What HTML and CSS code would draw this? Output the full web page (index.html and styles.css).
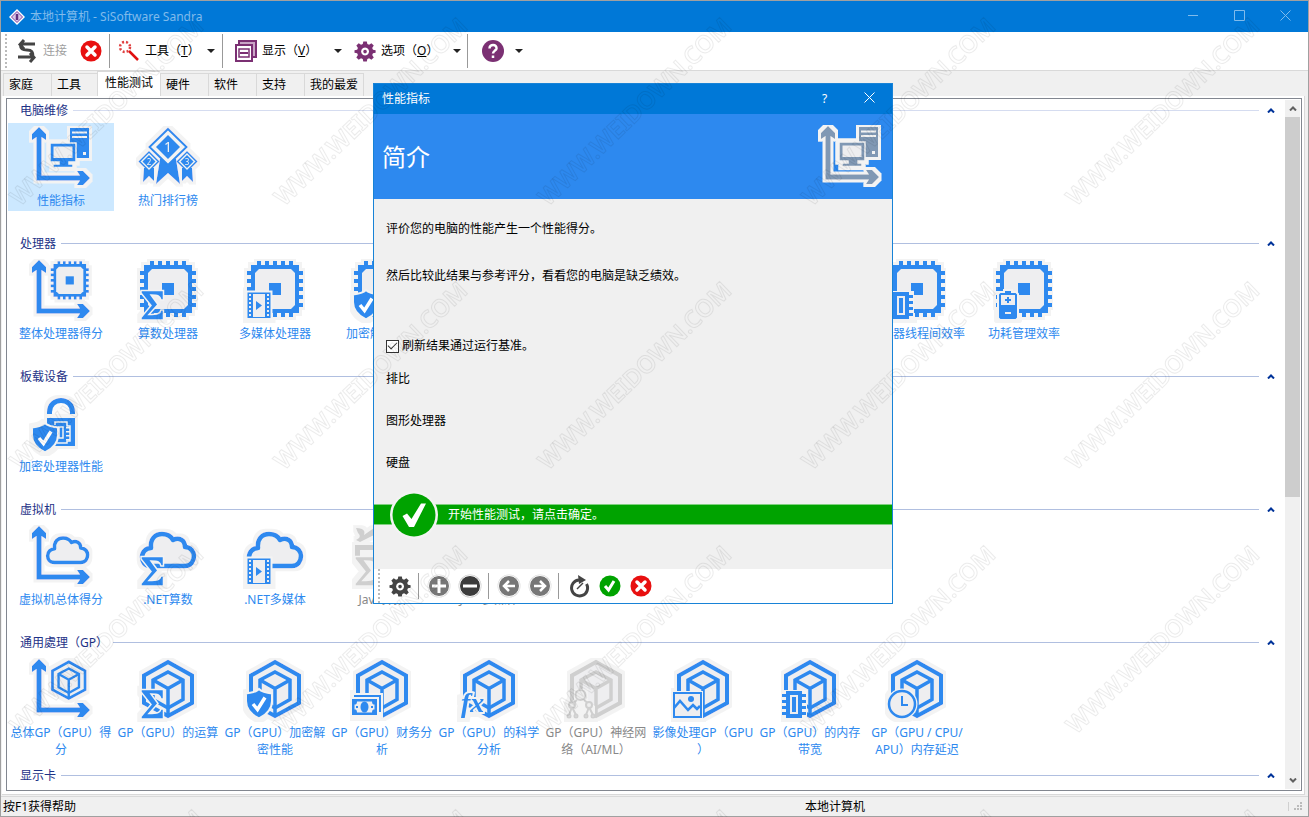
FILE: index.html
```html
<!DOCTYPE html>
<html lang="zh-CN">
<head>
<meta charset="utf-8">
<title>本地计算机 - SiSoftware Sandra</title>
<link rel="stylesheet" href="styles.css">
</head>
<body>
<svg class="defs" aria-hidden="true">
  <defs>
    <filter id="halo" x="-10%" y="-10%" width="120%" height="120%">
      <feMorphology in="SourceAlpha" operator="dilate" radius="3" result="grown"/>
      <feFlood flood-color="#f3f3f3"/>
      <feComposite in2="grown" operator="in" result="edge"/>
      <feMerge><feMergeNode in="edge"/><feMergeNode in="SourceGraphic"/></feMerge>
    </filter>
    <path id="axes" fill="currentColor" d="M10 1 17 8V14L12.500 11V49.500H51L48 45H54L61 52 54 59H48L51 54.500H7.500V11L3 14V8Z"/>
    <g id="pc">
      <path fill="currentColor" d="M41 2H60V32H41Z"/>
      <path fill="#f3f3f3" d="M43 5.500H58V7.500H43ZM43 10H58V12H43ZM54 26h3v3h-3Z"/>
      <path fill="currentColor" stroke="#f3f3f3" stroke-width="1.500" d="M21 17H47V36H40V38H44V41.500H24V38H30V36H21Z"/>
      <path fill="#eeeef0" d="M24.500 20.500H43.500V32H24.500Z"/>
    </g>
    <g id="chip">
      <path fill="none" stroke="currentColor" stroke-width="56" stroke-dasharray="4 4" d="M14 30H50"/>
      <path fill="none" stroke="currentColor" stroke-width="56" stroke-dasharray="4 4" d="M32 12V48"/>
      <path fill="currentColor" d="M8 6H56V54H8Z"/>
      <path fill="#eeeef0" d="M16 10H48L52 14V46L48 50H16L12 46V14Z"/>
      <path fill="currentColor" d="M26 24H38V36H26Z"/>
    </g>
    <g id="cube" fill="none" stroke="currentColor" stroke-width="4">
      <path fill="#eeeef0" d="M32 4 56 17.500V45L32 58 8 45V17.500Z"/>
      <path stroke-width="3.500" d="M32 14 47 22V41.500L32 50 17 41.500V22Z"/>
      <path stroke-width="3.500" d="M17 22 32 30.500 47 22M32 30V58"/>
    </g>
    <path id="cloud" fill="#eeeef0" stroke="currentColor" stroke-width="4.500" stroke-linejoin="round" d="M15 41C8 41 6 36 6 32 6 27 10 23 15 23 14 14 19 9 26 9 31 9 35 11 37 15 43 12 49 15 49 22 55 22 58 27 58 31 58 36 55 41 49 41Z"/>
    <path id="sigma" fill="currentColor" stroke="#f3f3f3" stroke-width="1.500" d="M5 31.500H27.500V41H25C24 37 22 36 15 36L22 45.500 13 55.500C21 55.500 24 55 25 51H27.500V61H5V58.500L15 46.500 5 34Z"/>
    <g id="film">
      <path fill="currentColor" stroke="#f3f3f3" stroke-width="2" d="M3.500 32.500H28.500V60H3.500Z"/>
      <path fill="#eeeef0" d="M10 35H22V58H10Z"/>
      <path fill="none" stroke="#eeeef0" stroke-width="2" stroke-dasharray="2 2" d="M7 35V58M25 35V58"/>
      <path fill="currentColor" d="M13 42 19 46.500 13 51Z"/>
    </g>
    <g id="shield">
      <path fill="currentColor" stroke="#f3f3f3" stroke-width="2" d="M16 31C19 34 24 35 29 35.500V43C29 52 23 57 16 60.500 9 57 3 52 3 43V35.500C8 35 13 34 16 31Z"/>
      <path fill="none" stroke="#fff" stroke-width="3.500" d="M10 46 14.500 51.500 22 39.500"/>
    </g>
    <g id="memory">
      <path fill="none" stroke="#f3f3f3" stroke-width="26" d="M16 32V61"/>
      <path fill="none" stroke="currentColor" stroke-width="24" stroke-dasharray="3 3" d="M16 36V57"/>
      <path fill="#eeeef0" stroke="currentColor" stroke-width="4" d="M10 35H22V58H10Z"/>
      <path fill="currentColor" d="M14 39H18V54H14Z"/>
    </g>
    <g id="arrow-ring"><circle cx="12" cy="12" r="11.500" fill="#ddd"/><circle cx="12" cy="12" r="10.500" fill="#777" stroke="#fff"/></g>
    <path id="gear" fill-rule="evenodd" transform="translate(1.500 1.500) scale(.88)" d="M10 1h4l.6 3 2 .9 2.600-1.800 2.700 2.700-1.800 2.600.9 2 3 .6v3l-3 .6-.9 2 1.800 2.600-2.700 2.700-2.600-1.800-2 .9-.6 3h-4l-.6-3-2-.9-2.600 1.800-2.700-2.700 1.800-2.600-.9-2-3-.6v-3l3-.6.9-2L2.100 5.800l2.700-2.700 2.600 1.800 2-.9ZM12 8a4.500 4.500 0 1 0 .01 0ZM12 10.500a2 2 0 1 1-.01 0Z"/>

    <symbol id="i-index" viewBox="0 0 64 64"><g filter="url(#halo)"><use href="#axes"/><use href="#pc"/></g></symbol>
    <symbol id="i-rank" viewBox="0 0 64 64"><g filter="url(#halo)">
      <path fill="currentColor" d="M24 33H40L44 58 32 47 20 58ZM8 42H18V55L13 50 7 56ZM46 42H56L57 56 51 50 46 55Z"/>
      <path fill="#f3f3f3" stroke="currentColor" stroke-width="2" d="M32 3 50.500 21 32 39 13.500 21Z"/>
      <path fill="currentColor" d="M32 9 44 21 32 33 20 21Z"/>
      <path fill="#f3f3f3" stroke="currentColor" stroke-width="1.500" d="M13 26 22.500 35.500 13 45 3.500 35.500ZM51 26 60.500 35.500 51 45 41.500 35.500Z"/>
      <path fill="currentColor" d="M13 29 19.500 35.500 13 42 6.500 35.500ZM51 29 57.500 35.500 51 42 44.500 35.500Z"/>
      <g fill="#f3f3f3" text-anchor="middle" class="medal"><text x="32" y="26" font-size="14">1</text><text x="13" y="39" font-size="8">2</text><text x="51" y="39" font-size="8">3</text></g>
    </g></symbol>
    <symbol id="i-cpu" viewBox="0 0 64 64"><g filter="url(#halo)"><use href="#axes"/><use href="#chip" transform="translate(19 1) scale(.68)"/></g></symbol>
    <symbol id="i-cpu-sigma" viewBox="0 0 64 64"><g filter="url(#halo)"><use href="#chip"/><use href="#sigma"/></g></symbol>
    <symbol id="i-cpu-film" viewBox="0 0 64 64"><g filter="url(#halo)"><use href="#chip"/><use href="#film"/></g></symbol>
    <symbol id="i-cpu-shield" viewBox="0 0 64 64"><g filter="url(#halo)"><use href="#chip"/><use href="#shield"/></g></symbol>
    <symbol id="i-cpu-memory" viewBox="0 0 64 64"><g filter="url(#halo)"><use href="#chip"/><use href="#memory"/></g></symbol>
    <symbol id="i-cpu-battery" viewBox="0 0 64 64"><g filter="url(#halo)"><use href="#chip"/>
      <path fill="currentColor" stroke="#f3f3f3" stroke-width="2" d="M6 35 8 33H12V31H20V33H24L26 35V59L24 61H8L6 59Z"/>
      <path fill="#eeeef0" d="M9 36H23V46H9ZM13 53H19V55H13Z"/><path fill="currentColor" d="M15 38H17V40H19V42H17V44H15V42H13V40H15Z"/></g></symbol>
    <symbol id="i-lock" viewBox="0 0 64 64"><g filter="url(#halo)">
      <path fill="#fafafa" stroke="currentColor" stroke-width="5" d="M20.500 22V20C20.500 4.500 43.500 4.500 43.500 20V22"/>
      <path fill="#f3f3f3" d="M18 22H46V26H18Z"/>
      <path fill="currentColor" d="M18 26H46V54H18Z"/>
      <path fill="none" stroke="#f3f3f3" stroke-width="1.500" d="M26 33V30H38V34H41V49H38V51H28M30 35H34V46H30Z"/>
      <path fill="none" stroke="#f3f3f3" stroke-width="4" stroke-dasharray="1.500 2.500" d="M39 35V49"/>
      <use href="#shield"/></g></symbol>
    <symbol id="i-vm" viewBox="0 0 64 64"><g filter="url(#halo)"><use href="#axes"/><use href="#cloud" transform="translate(14 6) scale(.77)"/></g></symbol>
    <symbol id="i-vm-sigma" viewBox="0 0 64 64"><g filter="url(#halo)"><use href="#cloud"/><use href="#sigma"/></g></symbol>
    <symbol id="i-vm-film" viewBox="0 0 64 64"><g filter="url(#halo)"><use href="#cloud"/><use href="#film"/></g></symbol>
    <symbol id="i-java" viewBox="0 0 64 64"><g filter="url(#halo)">
      <path fill="currentColor" d="M6 3C15 3 15 7 14 10L24 3V10L10 17 6 15C10 13 11 11 8 8ZM5 20H28V31H23V25H10V31H5Z"/><use href="#sigma"/></g></symbol>
    <symbol id="i-gp" viewBox="0 0 64 64"><g filter="url(#halo)"><use href="#axes"/><use href="#cube" transform="translate(18 1) scale(.68)"/></g></symbol>
    <symbol id="i-gp-sigma" viewBox="0 0 64 64"><g filter="url(#halo)"><use href="#cube"/><use href="#sigma"/></g></symbol>
    <symbol id="i-gp-shield" viewBox="0 0 64 64"><g filter="url(#halo)"><use href="#cube"/><use href="#shield"/></g></symbol>
    <symbol id="i-gp-money" viewBox="0 0 64 64"><g filter="url(#halo)"><use href="#cube"/>
      <path fill="#f3f3f3" d="M1 35H33V60H1Z"/>
      <path fill="none" stroke="currentColor" stroke-width="2" d="M4 38H30V54"/>
      <path fill="currentColor" d="M2 41H27V57H2Z"/><path fill="#eeeef0" d="M7 43.500H22C22 46 23 46.500 24.500 46.500V51.500C23 51.500 22 52 22 54.500H7C7 52 6 51.500 4.500 51.500V46.500C6 46.500 7 46 7 43.500Z"/>
      <ellipse cx="14.500" cy="49" rx="4" ry="5.500" fill="currentColor"/><path fill="currentColor" d="M6 48h2v2H6ZM21 48h2v2h-2Z"/></g></symbol>
    <symbol id="i-gp-fx" viewBox="0 0 64 64"><g filter="url(#halo)"><use href="#cube"/>
      <text x="4" y="54" font-size="28" class="fx" stroke="#f3f3f3" stroke-width="4" paint-order="stroke" fill="currentColor">fx</text></g></symbol>
    <symbol id="i-gp-net" viewBox="0 0 64 64"><g filter="url(#halo)"><use href="#cube"/>
      <path fill="#f3f3f3" d="M10 31H24V42L31 48V61H3V48L10 42Z"/>
      <g fill="#eee" stroke="currentColor" stroke-width="2"><path fill="none" d="M13 42 8 46M20 42 25 46M8 49 5 57M8 49 12 57M25 49 22 57M25 49 29 57"/><circle cx="16.500" cy="37" r="5"/><circle cx="8" cy="47" r="3"/><circle cx="25" cy="47" r="3"/><circle cx="5" cy="58" r="1.500"/><circle cx="12" cy="58" r="1.500"/><circle cx="22" cy="58" r="1.500"/><circle cx="29" cy="58" r="1.500"/></g></g></symbol>
    <symbol id="i-gp-image" viewBox="0 0 64 64"><g filter="url(#halo)"><use href="#cube"/>
      <path fill="#f3f3f3" d="M1 33H32V61H1Z"/><path fill="#eeeef0" stroke="currentColor" stroke-width="2" d="M3 35H30V59H3Z"/>
      <path fill="none" stroke="currentColor" stroke-width="2.500" d="M3 50 9 43 17 52 22 47 26 51 29 48"/><circle cx="20" cy="41" r="3" fill="currentColor"/></g></symbol>
    <symbol id="i-gp-memory" viewBox="0 0 64 64"><g filter="url(#halo)"><use href="#cube"/><use href="#memory"/></g></symbol>
    <symbol id="i-gp-clock" viewBox="0 0 64 64"><g filter="url(#halo)"><use href="#cube"/>
      <circle cx="17" cy="46" r="15.500" fill="#f3f3f3"/><circle cx="17" cy="46" r="13" fill="#eeeef0" stroke="currentColor" stroke-width="2.500"/>
      <path fill="none" stroke="currentColor" stroke-width="2" d="M17 38V47H23"/></g></symbol>

    <symbol id="t-stop" viewBox="0 0 24 24"><circle cx="12" cy="12" r="10.500" fill="#e81010"/><path d="M8 8 16 16M16 8 8 16" stroke="#fff" stroke-width="3.500" stroke-linecap="round"/></symbol>
    <symbol id="t-ok" viewBox="0 0 24 24"><circle cx="12" cy="12" r="10.500" fill="#00a300"/><path d="M7 12 10.500 16 16 7" fill="none" stroke="#fff" stroke-width="3"/></symbol>
  </defs>
</svg>

<div class="window">
  <header class="titlebar">
    <svg class="app-icon" viewBox="0 0 16 16" aria-hidden="true"><path d="M8 0 16 8 8 16 0 8Z" fill="#fff"/><path d="M8 2.500 13.500 8 8 13.500 2.500 8Z" fill="#d9c6e6" stroke="#7b3fa0"/><path d="M8 5V11" stroke="#603080" stroke-width="2.500"/></svg>
    <h1>本地计算机 - SiSoftware Sandra</h1>
    <div class="window-controls">
      <button type="button" aria-label="最小化"><svg viewBox="0 0 11 11"><path d="M0 5.500H10"/></svg></button>
      <button type="button" aria-label="最大化"><svg viewBox="0 0 11 11"><path d="M.5.5H10.500V10.500H.5Z"/></svg></button>
      <button type="button" aria-label="关闭"><svg viewBox="0 0 11 11"><path d="M.5.5 10.500 10.500M10.500.5.5 10.500"/></svg></button>
    </div>
  </header>

  <div class="toolbar" role="toolbar">
    <span class="grip"></span>
    <button type="button" class="tool connect" disabled><svg viewBox="0 0 24 24"><g fill="none" stroke="#444" stroke-width="3"><path d="M20 5H6M9 1 5 5.500 9 10M5.500 6C5.500 10 8 11 12 11 17 11 18 13 18 18M3 18H18M15 14 19 18.500 15 23"/></g></svg>连接</button>
    <button type="button" class="tool stop" aria-label="断开"><svg><use href="#t-stop"/></svg></button>
    <span class="sep"></span>
    <button type="button" class="tool"><svg viewBox="0 0 24 24"><path d="M12 12 21 21" stroke="#e01010" stroke-width="2.500"/><circle cx="8" cy="8" r="5" fill="none" stroke="#e04040" stroke-width="2.500" stroke-dasharray="2 2"/></svg><span class="wide">工具（<u>T</u>）</span><i class="caret"></i></button>
    <span class="sep"></span>
    <button type="button" class="tool show"><svg viewBox="0 0 24 24"><g fill="#fff" stroke="#7b3073" stroke-width="2"><path d="M5 2H22V18H5Z" fill="#c9a5c5"/><path d="M2 6H18V22H2Z"/><path d="M5 10H15V18H5Z" stroke-width="1.500"/><path d="M6 14H14"/></g></svg><span class="wider">显示（<u>V</u>）</span><i class="caret"></i></button>
    <button type="button" class="tool options"><svg viewBox="0 0 24 24" fill="#7b3073"><use href="#gear"/></svg><span class="wider">选项（<u>O</u>）</span><i class="caret"></i></button>
    <span class="sep"></span>
    <button type="button" class="tool help" aria-label="帮助"><svg viewBox="0 0 24 24"><circle cx="12" cy="12" r="11" fill="#7b3073"/><path d="M8.500 9.500C8.500 4.500 16 5 15.500 9.500 15.200 11.500 12 12 12 14.500M12 16.500V19" fill="none" stroke="#fff" stroke-width="2.500"/></svg><i class="caret"></i></button>
  </div>

  <nav class="tabs" role="tablist">
    <button type="button" role="tab">家庭</button>
    <button type="button" role="tab">工具</button>
    <button type="button" role="tab" class="active" aria-selected="true">性能测试</button>
    <button type="button" role="tab">硬件</button>
    <button type="button" role="tab">软件</button>
    <button type="button" role="tab">支持</button>
    <button type="button" role="tab">我的最爱</button>
  </nav>

  <main class="page">
    <div class="panel">
      <div class="groups">
        <section class="group first">
          <h2>电脑维修<span class="rule"></span><svg class="fold" viewBox="0 0 8 5"><path d="M1 4.500 4 1.500 7 4.500"/></svg></h2>
          <div class="items">
            <button type="button" class="item selected"><svg><use href="#i-index"/></svg>性能指标</button>
            <button type="button" class="item"><svg><use href="#i-rank"/></svg>热门排行榜</button>
          </div>
        </section>
        <section class="group">
          <h2>处理器<span class="rule"></span><svg class="fold" viewBox="0 0 8 5"><path d="M1 4.500 4 1.500 7 4.500"/></svg></h2>
          <div class="items">
            <button type="button" class="item"><svg><use href="#i-cpu"/></svg>整体处理器得分</button>
            <button type="button" class="item"><svg><use href="#i-cpu-sigma"/></svg>算数处理器</button>
            <button type="button" class="item"><svg><use href="#i-cpu-film"/></svg>多媒体处理器</button>
            <button type="button" class="item"><svg><use href="#i-cpu-shield"/></svg>加密解密性能</button>
            <button type="button" class="item ninth"><svg><use href="#i-cpu-memory"/></svg>处理器线程间效率</button>
            <button type="button" class="item"><svg><use href="#i-cpu-battery"/></svg>功耗管理效率</button>
          </div>
        </section>
        <section class="group">
          <h2>板载设备<span class="rule"></span><svg class="fold" viewBox="0 0 8 5"><path d="M1 4.500 4 1.500 7 4.500"/></svg></h2>
          <div class="items">
            <button type="button" class="item"><svg><use href="#i-lock"/></svg>加密处理器性能</button>
          </div>
        </section>
        <section class="group">
          <h2>虚拟机<span class="rule"></span><svg class="fold" viewBox="0 0 8 5"><path d="M1 4.500 4 1.500 7 4.500"/></svg></h2>
          <div class="items">
            <button type="button" class="item"><svg><use href="#i-vm"/></svg>虚拟机总体得分</button>
            <button type="button" class="item"><svg><use href="#i-vm-sigma"/></svg>.NET算数</button>
            <button type="button" class="item"><svg><use href="#i-vm-film"/></svg>.NET多媒体</button>
            <button type="button" class="item off"><svg><use href="#i-java"/></svg>Java算数</button>
            <button type="button" class="item off"><svg><use href="#i-java"/></svg>Java多媒体</button>
          </div>
        </section>
        <section class="group">
          <h2>通用處理（GP）<span class="rule"></span><svg class="fold" viewBox="0 0 8 5"><path d="M1 4.500 4 1.500 7 4.500"/></svg></h2>
          <div class="items">
            <button type="button" class="item"><svg><use href="#i-gp"/></svg>总体GP（GPU）得<br>分</button>
            <button type="button" class="item"><svg><use href="#i-gp-sigma"/></svg>GP（GPU）的运算</button>
            <button type="button" class="item"><svg><use href="#i-gp-shield"/></svg>GP（GPU）加密解<br>密性能</button>
            <button type="button" class="item"><svg><use href="#i-gp-money"/></svg>GP（GPU）财务分<br>析</button>
            <button type="button" class="item"><svg><use href="#i-gp-fx"/></svg>GP（GPU）的科学<br>分析</button>
            <button type="button" class="item off"><svg><use href="#i-gp-net"/></svg>GP（GPU）神经网<br>络（AI/ML）</button>
            <button type="button" class="item"><svg><use href="#i-gp-image"/></svg>影像处理GP（GPU<br>）</button>
            <button type="button" class="item"><svg><use href="#i-gp-memory"/></svg>GP（GPU）的内存<br>带宽</button>
            <button type="button" class="item"><svg><use href="#i-gp-clock"/></svg>GP（GPU / CPU/<br>APU）内存延迟</button>
          </div>
        </section>
        <section class="group">
          <h2>显示卡<span class="rule"></span><svg class="fold" viewBox="0 0 8 5"><path d="M1 4.500 4 1.500 7 4.500"/></svg></h2>
        </section>
      </div>
      <div class="scrollbar">
        <button type="button" aria-label="向上滚动"><svg viewBox="0 0 8 5"><path d="M1 4.500 4 1.500 7 4.500"/></svg></button>
        <div class="track"><div class="thumb"></div></div>
        <button type="button" aria-label="向下滚动"><svg viewBox="0 0 8 5"><path d="M1 .5 4 3.500 7 .5"/></svg></button>
      </div>
    </div>
  </main>

  <footer class="status">
    <span class="hint">按F1获得帮助</span>
    <span class="host">本地计算机</span>
    <svg class="size-grip" viewBox="0 0 9 9" aria-hidden="true"><path d="M6 0h2v2H6ZM3 3h2v2H3ZM6 3h2v2H6ZM0 6h2v2H0ZM3 6h2v2H3ZM6 6h2v2H6Z"/></svg>
  </footer>
</div>

<div class="dialog" role="dialog" aria-labelledby="dialog-title">
  <header class="dialog-title">
    <h2 id="dialog-title">性能指标</h2>
    <button type="button" aria-label="帮助">?</button>
    <button type="button" aria-label="关闭"><svg viewBox="0 0 11 11"><path d="M.5.5 10.500 10.500M10.500.5.5 10.500"/></svg></button>
  </header>
  <div class="banner"><h3>简介</h3><svg viewBox="0 0 64 64"><use href="#i-index"/></svg></div>
  <div class="dialog-body">
    <p class="intro">评价您的电脑的性能产生一个性能得分。</p>
    <p class="compare">然后比较此结果与参考评分，看看您的电脑是缺乏绩效。</p>
    <label class="check"><input type="checkbox" checked><span>刷新结果通过运行基准。</span></label>
    <p class="field">排比</p>
    <p class="field">图形处理器</p>
    <p class="field">硬盘</p>
  </div>
  <div class="notice">
    <svg viewBox="0 0 48 48" aria-hidden="true"><circle cx="24" cy="24" r="24" fill="#f3f3f3"/><circle cx="24" cy="24" r="21.500" fill="#00a300"/><path d="M12.500 25 17 22.500 21.500 28 31 12.500H36L24 36H19Z" fill="#fff"/></svg>
    <span>开始性能测试，请点击确定。</span>
  </div>
  <div class="dialog-tools">
    <span class="grip"></span>
    <button type="button" aria-label="设置"><svg viewBox="0 0 24 24" fill="#444"><use href="#gear"/></svg></button>
    <span class="sep"></span>
    <button type="button" aria-label="添加"><svg viewBox="0 0 24 24"><use href="#arrow-ring"/><path d="M12 5V19M5 12H19" stroke="#fff" stroke-width="3"/></svg></button>
    <button type="button" aria-label="移除"><svg viewBox="0 0 24 24"><circle cx="12" cy="12" r="11.500" fill="#ccc"/><circle cx="12" cy="12" r="10.500" fill="#3c3c3c" stroke="#fff"/><path d="M5 12H19" stroke="#fff" stroke-width="3"/></svg></button>
    <span class="sep"></span>
    <button type="button" aria-label="上一步"><svg viewBox="0 0 24 24"><use href="#arrow-ring"/><path d="M18 12H8M12 7 7 12 12 17" fill="none" stroke="#fff" stroke-width="2.500"/></svg></button>
    <button type="button" aria-label="下一步"><svg viewBox="0 0 24 24"><use href="#arrow-ring"/><path d="M6 12H16M12 7 17 12 12 17" fill="none" stroke="#fff" stroke-width="2.500"/></svg></button>
    <span class="sep"></span>
    <button type="button" aria-label="刷新"><svg viewBox="0 0 24 24"><path d="M12 6A8 8 0 1 0 19.500 10" fill="none" stroke="#444" stroke-width="3"/><path d="M11 1 19 6 12 10Z" fill="#444"/><path d="M10 15 16 9" stroke="#444" stroke-width="1.500"/></svg></button>
    <button type="button" aria-label="确定"><svg><use href="#t-ok"/></svg></button>
    <button type="button" aria-label="取消"><svg><use href="#t-stop"/></svg></button>
  </div>
</div>

<svg class="watermark" aria-hidden="true">
  <defs>
    <pattern id="mark" x="0" y="0" width="264" height="264" patternUnits="userSpaceOnUse" patternTransform="translate(2 -54)">
      <text transform="translate(18 261) rotate(-44)">WWW.WEIDOWN.COM</text>
    </pattern>
  </defs>
  <rect width="100%" height="100%" fill="url(#mark)"/>
</svg>
</body>
</html>
```
FILE: styles.css
```css
* { box-sizing: border-box; }

body {
  margin: 0;
  overflow: hidden;
  font: 12px/16px "Noto Sans", "Noto Sans CJK SC", sans-serif;
  color: #000;
  background: #f0f0f0;
}

h1, h2, h3, p { margin: 0; font-size: 12px; font-weight: 400; }

button {
  margin: 0;
  padding: 0;
  border: 0;
  background: none;
  font: inherit;
  color: inherit;
}

.defs { position: absolute; width: 0; height: 0; }
.medal { font-family: "Noto Sans", sans-serif; }
.fx { font-family: "Liberation Serif", serif; font-style: italic; font-weight: 700; }

.window {
  display: flex;
  flex-direction: column;
  height: 100vh;
  border: 1px solid #a0a0a0;
}

/* Title bar */
.titlebar {
  display: flex;
  align-items: center;
  height: 31px;
  flex: none;
  padding-left: 8px;
  gap: 5px;
  background: #0078d7;
  color: #80bbeb;
}
.app-icon { width: 16px; height: 16px; }
.window-controls { display: flex; margin-left: auto; }
.window-controls button { width: 46px; height: 28px; }
.window-controls svg { width: 11px; height: 11px; fill: none; stroke: #80bbeb; }

/* Toolbar */
.toolbar {
  display: flex;
  align-items: center;
  flex: none;
  height: 39px;
  padding-left: 4px;
  background: #fff;
  border-bottom: 1px solid #d9d9d9;
}
.grip { width: 2px; height: 34px; background: repeating-linear-gradient(#bbb 0 2px, #fff 2px 4px); }
.sep { width: 1px; height: 34px; background: #999; }
.tool { display: flex; align-items: center; height: 34px; padding: 0 7px; gap: 4px; }
.tool svg { width: 24px; height: 24px; }
.connect { padding: 0 12px 0 8px; color: #a0a0a0; }
.stop { padding: 0 6px 0 0; }
.wide { width: 58px; text-align: left; }
.wider { width: 68px; text-align: left; }
.show { padding: 0 6px 0 11px; }
.options { padding: 0 6px 0 5px; }
.help { padding-left: 13px; gap: 10px; }
.caret { border: 4px solid transparent; border-top-color: #222; border-bottom: 0; }

/* Tabs */
.tabs { display: flex; align-items: flex-end; flex: none; height: 25px; padding-left: 2px; }
.tabs button {
  min-width: 48px;
  height: 23px;
  padding: 0 5px;
  text-align: left;
  border: 1px solid #d9d9d9;
  border-width: 1px 0 0 1px;
}
.tabs button:last-child { border-right-width: 1px; }
.tabs .active {
  height: 25px;
  margin-left: -2px;
  padding: 0 7px 3px;
  background: #fff;
}

/* Page with grouped icons */
.page {
  display: flex;
  flex: 1;
  min-height: 0;
  margin: 0 3px 1px 1px;
  padding: 2px 2px 3px 4px;
  background: #fff;
  border: 1px solid #d9d9d9;
  border-width: 0 1px 1px 0;
}
.panel { display: flex; flex: 1; min-width: 0; border: 1px solid #828790; }
.groups { flex: 1; min-width: 0; overflow: hidden; padding-left: 1px; }
.group { height: 133px; }
.group h2 {
  display: flex;
  align-items: center;
  height: 24px;
  padding: 0 10px 1px 12px;
  color: #1e3287;
}
.rule { flex: 1; height: 1px; margin: 0 8px 0 5px; background: #b0bfe0; }
.first .rule { background: #d5dcf0; }
.fold { width: 8px; height: 5px; fill: none; stroke: #003399; stroke-width: 2; }
.items { display: grid; grid-template-columns: repeat(auto-fill, 107px); }
.item {
  display: block;
  align-self: start;
  width: 106px;
  padding: 3px 0 2px;
  line-height: 17px;
  white-space: nowrap;
  color: #2d89ef;
}
.item svg { display: block; width: 64px; height: 64px; margin: 0 auto 2px; }
.selected { background: #cce8ff; }
.off { color: #888; }
.off svg { color: #cfcfcf; }
.ninth { grid-column: 9; }

.scrollbar { display: flex; flex-direction: column; width: 15px; margin: 1px 1px 1px 0; background: #f0f0f0; }
.scrollbar button { height: 17px; line-height: 0; }
.scrollbar svg { width: 8px; height: 5px; fill: none; stroke: #606060; stroke-width: 2; }
.track { flex: 1; }
.thumb { height: 58%; background: #cdcdcd; }

/* Status bar */
.status {
  display: flex;
  align-items: center;
  flex: none;
  height: 20px;
  padding-left: 2px;
  border-top: 1px solid #d9d9d9;
}
.hint { flex: 802; }
.host { flex: 483; }
.size-grip { width: 20px; height: 9px; border-left: 1px solid #d0d0d0; fill: #bbb; }

/* Wizard dialog floating over the main window */
.dialog {
  position: absolute;
  left: 373px;
  top: 83px;
  width: 520px;
  border: 1px solid #1883d7;
  background: #f0f0f0;
}
.dialog-title {
  display: flex;
  align-items: center;
  height: 30px;
  padding-left: 8px;
  background: #0078d7;
  color: #fff;
}
.dialog-title h2 { flex: 1; }
.dialog-title button { width: 45px; height: 30px; }
.dialog-title svg { width: 11px; height: 11px; fill: none; stroke: #fff; }
.banner {
  display: flex;
  align-items: center;
  justify-content: space-between;
  height: 85px;
  padding: 0 10px 0 8px;
  background: #2d89ef;
  color: #fff;
}
.banner h3 { font-size: 24px; line-height: 32px; }
.banner svg { width: 64px; height: 64px; color: #8098b4; }
.dialog-body { padding: 22px 12px 0; }
.dialog-body p { margin-bottom: 26px; }
.dialog-body .intro { margin-bottom: 31px; }
.dialog-body .compare { margin-bottom: 54px; }
.dialog-body .field:last-child { margin-bottom: 33px; }
.check { display: flex; align-items: center; gap: 3px; margin-bottom: 17px; }
.check input {
  appearance: none;
  width: 13px;
  height: 13px;
  margin: 0;
  border: 1px solid #333;
  background: #fff;
  display: grid;
  place-items: center;
}
.check input:checked::before {
  content: "";
  width: 8px;
  height: 4px;
  margin-bottom: 3px;
  border: solid #333;
  border-width: 0 0 1px 1px;
  rotate: -45deg;
}
.notice {
  display: flex;
  align-items: center;
  height: 21px;
  gap: 10px;
  padding-left: 16px;
  border: 1px solid #7fd07f;
  border-width: 1px 0;
  background: #00a300;
  color: #fff;
}
.notice svg { width: 48px; height: 48px; flex: none; }
.dialog-tools {
  display: flex;
  align-items: center;
  height: 34px;
  margin-top: 44px;
  padding-left: 4px;
  background: #fff;
}
.dialog-tools .grip { margin-right: 4px; }
.dialog-tools .sep { height: 26px; margin: 0 4px 0 3px; }
.dialog-tools button { width: 31px; height: 30px; line-height: 0; }
.dialog-tools svg { width: 24px; height: 24px; }

.watermark {
  position: absolute;
  left: 0;
  top: 0;
  width: 100%;
  height: 100%;
  pointer-events: none;
}
.watermark text {
  font-family: "Noto Sans", sans-serif;
  font-size: 24px;
  font-weight: 600;
  fill: none;
  stroke: #000;
  stroke-opacity: .08;
  stroke-width: 1;
}
```
